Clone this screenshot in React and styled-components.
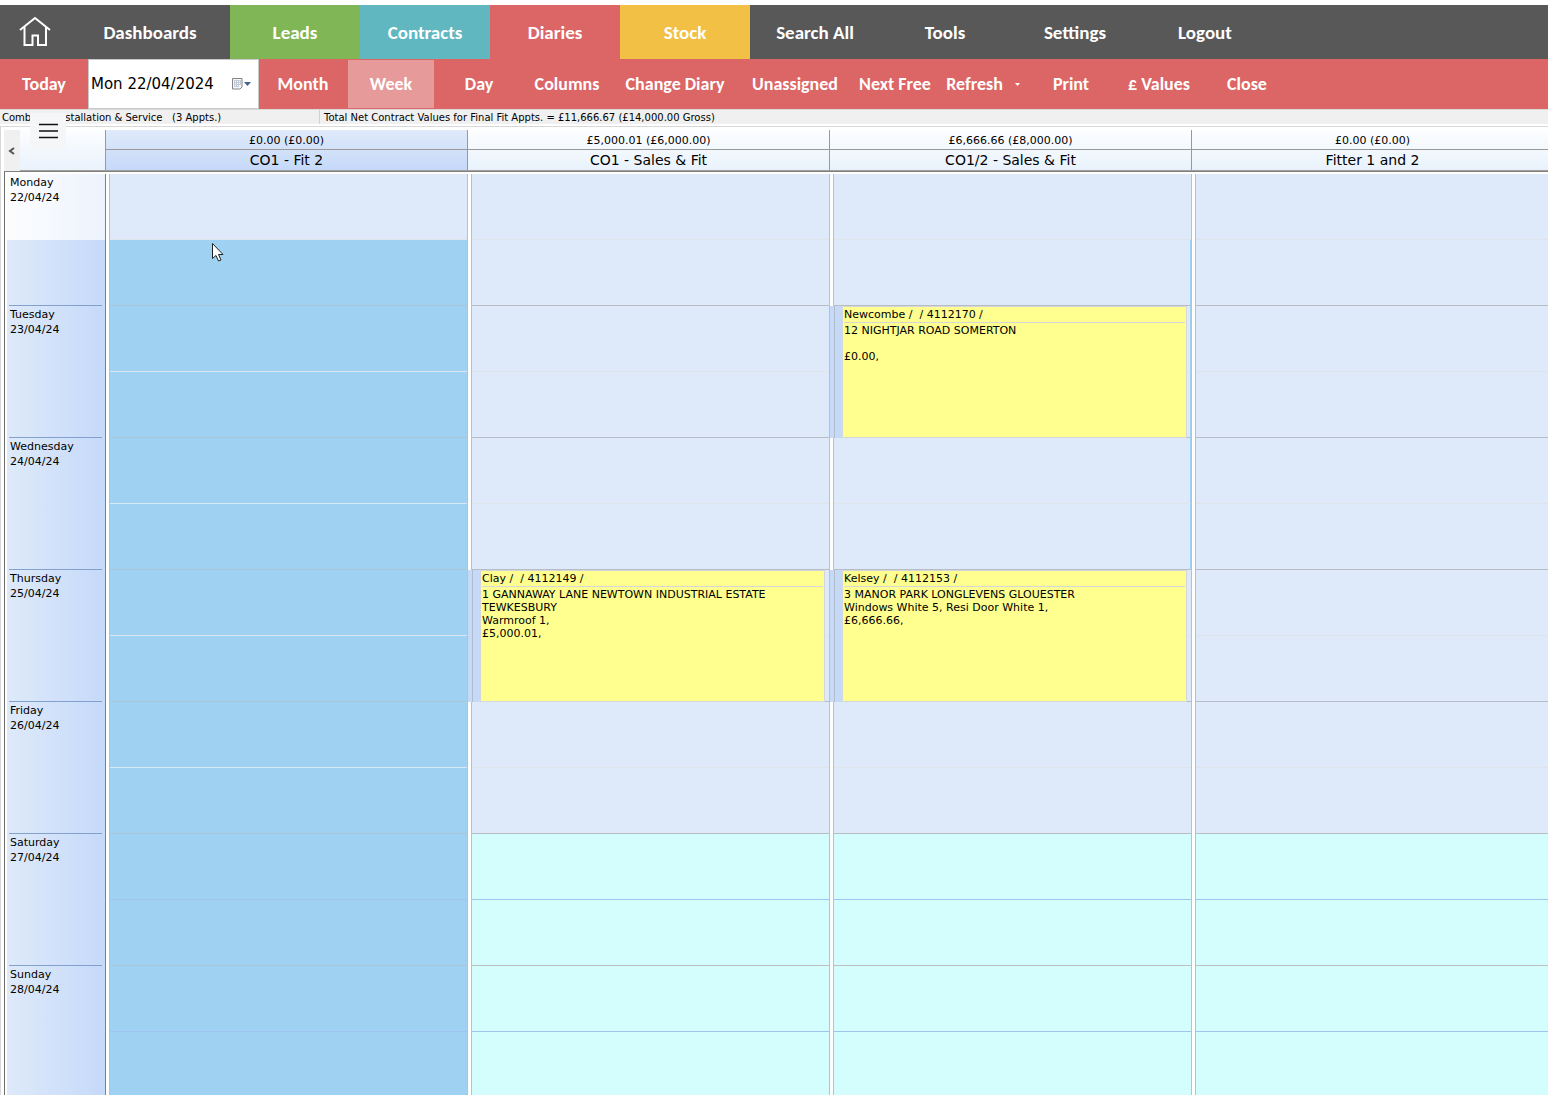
import React from 'react'
import styled, { createGlobalStyle } from 'styled-components'

const GlobalStyle = createGlobalStyle`
    * {
        box-sizing: border-box;
    }
    body {
        margin: 0;
        background-color: white;
        color: black;
        font-family: Verdana, "DejaVu Sans", sans-serif;
        font-size: 11px;
    }
    button, input {
        font: inherit;
        color: inherit;
        border: none;
        padding: 0;
        margin: 0;
        background: none;
    }
`;

const Container = styled.div`
    height: 100vh;
    padding-top: 5px;
    display: flex;
    flex-direction: column;
    overflow: hidden;
`;

const Nav = styled.nav`
    display: flex;
    flex: none;
    height: 54px;
    background-color: #585858;
    color: white;
    font: bold 19px Calibri, Carlito, Lato, sans-serif;
`;

const NavLink = styled.a`
    width: ${(props) => props.$width || 130}px;
    display: flex;
    align-items: center;
    justify-content: center;
    color: white;
    text-decoration: none;
    background-color: ${(props) => props.$color || 'transparent'};
`;

const Toolbar = styled.div`
    display: flex;
    flex: none;
    height: 50px;
    background-color: #dc6565;
    color: white;
    font: bold 18px Calibri, Carlito, Lato, sans-serif;
`;

const ToolButton = styled.button`
    width: ${(props) => props.$width || 88}px;
    display: flex;
    align-items: center;
    justify-content: center;
    gap: 12px;
    white-space: nowrap;
    cursor: pointer;
    border: 1px solid #dc6565;
    background-color: ${(props) => (props.$active ? '#e69a9a' : 'transparent')};
`;

const DateField = styled.div`
    width: 171px;
    display: flex;
    align-items: center;
    justify-content: space-between;
    padding: 0 6px 0 2px;
    background-color: white;
    border: 1px solid #c8c8c8;
    color: black;
`;

const DateInput = styled.input`
    width: 136px;
    font: 15px Verdana, "DejaVu Sans", sans-serif;
    outline: none;
`;

const IconButton = styled.button`
    display: flex;
    align-items: center;
    cursor: pointer;
`;

const StatusBar = styled.div`
    display: flex;
    flex: none;
    height: 15px;
    line-height: 15px;
    font-size: 10px;
    white-space: pre;
    background-color: #f0f0f0;
    border-top: 1px solid #dadada;
`;

const StatusText = styled.span`
    width: ${(props) => props.$width || 'auto'};
    padding-left: ${(props) => (props.$divider ? 4 : 2)}px;
    border-left: ${(props) => (props.$divider ? '1px solid #d0d0d0' : 'none')};
`;

const MenuButton = styled.button`
    position: absolute;
    top: 113px;
    left: 30px;
    width: 36px;
    height: 36px;
    display: flex;
    align-items: center;
    justify-content: center;
    background-color: #f5f6f7;
`;

const Diary = styled.main`
    flex: 1;
    min-height: 0;
    display: flex;
    flex-direction: column;
    margin-top: 2px;
    padding: 3px 0 0 3px;
    border-top: 1px solid #d8d8d8;
    border-left: 1px solid #d8d8d8;
    overflow: hidden;
`;

const Header = styled.div`
    display: flex;
    flex: none;
    height: 42px;
    border-bottom: 1px solid #808078;
    margin-right: -5px;
`;

const BackButton = styled.button`
    width: 16px;
    background-color: #f0f0f0;
    display: flex;
    align-items: center;
    justify-content: center;
`;

const Corner = styled.div`
    width: 85px;
    border-bottom: 1px solid #a0a0a0;
    background: linear-gradient(#fcfdff, #eaf2fc);
`;

const ColumnHead = styled.div`
    flex: 1;
    min-width: 0;
    text-align: center;
    border-left: 1px solid #999;
    border-bottom: 1px solid #a0a0a0;
    background: ${(props) => (props.$selected
        ? 'linear-gradient(#dfeafa, #c5d9f9)'
        : 'linear-gradient(#fdfeff, #e9f2fc)')};
`;

const Total = styled.div`
    height: 20px;
    line-height: 21px;
    border-bottom: 1px solid #999;
`;

const ColumnName = styled.div`
    font-size: 14px;
    line-height: 21px;
`;

const Body = styled.div`
    display: flex;
    flex: 1;
    min-height: 0;
    overflow: hidden;
    margin-right: -6px;
    padding-top: 2px;
    border-left: 1px solid #707070;
`;

const Days = styled.div`
    width: 101px;
    flex: none;
    padding-left: 2px;
    border-right: 1px solid #808080;
    height: max-content;
`;

const Day = styled.div`
    height: 132px;
    padding: 0 3px 0 2px;
    background: ${(props) => (props.$today
        ? 'linear-gradient(to right, #fdfdfe, #ecf3fd) top / 100% 66px no-repeat, '
        : '')}linear-gradient(to right, #deeafa, #c5d9f9);
`;

const DayLabel = styled.div`
    height: 132px;
    padding: 1px;
    line-height: 15px;
    border-bottom: 1px solid #84a0cc;
`;

const Column = styled.div`
    flex: 1;
    min-width: 0;
    height: max-content;
    padding-left: 3px;
`;

const ColumnDay = styled.div`
    position: relative;
    border: 1px solid #bfbfbf;
    border-width: 0 1px;
`;

// background, half day line, end of day line
const slotColors = {
    work: ['#deeafa', '#dfe3ec', '#b8bcc4'],
    weekend: ['#d4fefe', '#a0c4f0', '#bfbfbf'],
    selected: ['#9fd2f2', '#d9e8f4', '#abc5d2'],
    selectedWeekend: ['#9fd2f2', '#9fc4f0', '#abc5d2'],
};

const Slot = styled.div`
    height: 66px;
    background-color: ${(props) => slotColors[props.$kind][0]};
    border-bottom: 1px solid ${(props) => slotColors[props.$kind][props.$last ? 2 : 1]};
    border-right: ${(props) => (props.$edge ? '1px solid #9fd2f2' : 'none')};
`;

const Appointment = styled.article`
    position: absolute;
    top: 0;
    bottom: 0;
    left: -4px;
    right: 4px;
    border-left: 12px solid #c5d9f9;
    display: flex;

    &::before {
        content: "";
        position: absolute;
        top: 0;
        bottom: 0;
        left: -12px;
        width: 4px;
        border-right: 1px solid #b4bccc;
    }
`;

const Card = styled.div`
    flex: 1;
    padding: 0 1px;
    line-height: 13px;
    white-space: pre-line;
    background-color: #ffff90;
    border: 1px solid #d4d8dc;
`;

const CardTitle = styled.div`
    height: 16px;
    line-height: 16px;
    margin-bottom: 1px;
    white-space: pre;
    border-bottom: 1px solid #d4d8dc;
`;

const Pointer = styled.svg`
    position: absolute;
    top: 242px;
    left: 211px;
`;

const navItems = [
    { name: 'Dashboards', width: 160 },
    { name: 'Leads', color: '#80b655' },
    { name: 'Contracts', color: '#60b7c0' },
    { name: 'Diaries', color: '#dc6565' },
    { name: 'Stock', color: '#f1c045' },
    { name: 'Search All' },
    { name: 'Tools' },
    { name: 'Settings' },
    { name: 'Logout' },
];

const tools = [
    { name: 'Month' },
    { name: 'Week', active: true },
    { name: 'Day' },
    { name: 'Columns' },
    { name: 'Change Diary', width: 128 },
    { name: 'Unassigned', width: 112 },
    { name: 'Next Free' },
    { name: 'Refresh', menu: true },
    { name: 'Print' },
    { name: '£ Values' },
    { name: 'Close' },
];

const days = [
    { name: 'Monday', date: '22/04/24' },
    { name: 'Tuesday', date: '23/04/24' },
    { name: 'Wednesday', date: '24/04/24' },
    { name: 'Thursday', date: '25/04/24' },
    { name: 'Friday', date: '26/04/24' },
    { name: 'Saturday', date: '27/04/24', weekend: true },
    { name: 'Sunday', date: '28/04/24', weekend: true },
];

const columns = [
    { name: 'CO1 - Fit 2', total: '£0.00 (£0.00)', selected: true, appointments: {} },
    {
        name: 'CO1 - Sales & Fit',
        total: '£5,000.01 (£6,000.00)',
        appointments: {
            Thursday: {
                title: 'Clay /  / 4112149 /',
                text: '1 GANNAWAY LANE NEWTOWN INDUSTRIAL ESTATE\nTEWKESBURY\nWarmroof 1,\n£5,000.01,',
            },
        },
    },
    {
        name: 'CO1/2 - Sales & Fit',
        total: '£6,666.66 (£8,000.00)',
        edge: true,
        appointments: {
            Tuesday: {
                title: 'Newcombe /  / 4112170 /',
                text: '12 NIGHTJAR ROAD SOMERTON\n\n£0.00,',
            },
            Thursday: {
                title: 'Kelsey /  / 4112153 /',
                text: '3 MANOR PARK LONGLEVENS GLOUESTER\nWindows White 5, Resi Door White 1,\n£6,666.66,',
            },
        },
    },
    { name: 'Fitter 1 and 2', total: '£0.00 (£0.00)', appointments: {} },
];

const slotKind = (column, day, index) => {
    if (column.selected && index > 0) return day.weekend ? 'selectedWeekend' : 'selected'
    return day.weekend ? 'weekend' : 'work'
}

const HomeIcon = () => (
    <svg width="32" height="32" viewBox="0 0 32 32" fill="none" stroke="white" strokeWidth="2">
        <path d="M1 14L16 2l15 12" />
        <path d="M5.500 11v18h8V19.500h5.500V29h8V11" />
    </svg>
)

const CalendarIcon = () => (
    <svg width="21" height="14" viewBox="0 0 21 14">
        <path d="M1.500 1.500h9.500v8.500l-2 2h-7.500z" fill="#f6f7fa" stroke="#85828a" />
        <path d="M3 3.500h7M3 5.500h7M3 7.500h7M3 9.500h5M3.500 3v7M5.500 3v7M7.500 3v7M9.500 3v5" stroke="#c3cad8" strokeWidth="1" fill="none" />
        <path d="M13 5h7l-3.500 4z" fill="#44608c" />
    </svg>
)

const App = () => {
  return (
    <Container>
        <GlobalStyle/>
        <Nav>
            <NavLink href="#home" aria-label="Home" $width={70}><HomeIcon/></NavLink>
            {navItems.map((item) => (
                <NavLink key={item.name} href="#" $width={item.width} $color={item.color}>{item.name}</NavLink>
            ))}
        </Nav>
        <Toolbar>
            <ToolButton>Today</ToolButton>
            <DateField>
                <DateInput aria-label="Date" defaultValue="Mon 22/04/2024"/>
                <IconButton aria-label="Choose date"><CalendarIcon/></IconButton>
            </DateField>
            {tools.map((tool) => (
                <ToolButton key={tool.name} $width={tool.width} $active={tool.active}>
                    {tool.name}
                    {tool.menu && <svg width="5" height="3"><path d="M0 0h5L2.500 3z" fill="white"/></svg>}
                </ToolButton>
            ))}
        </Toolbar>
        <StatusBar>
            <StatusText $width="319px">Combined Installation & Service   (3 Appts.)</StatusText>
            <StatusText $divider>Total Net Contract Values for Final Fit Appts. = £11,666.67 (£14,000.00 Gross)</StatusText>
        </StatusBar>
        <Diary>
            <Header>
                <BackButton aria-label="Previous">
                    <svg width="8" height="8" fill="none" stroke="#555" strokeWidth="2"><path d="M6 1L2 4l4 3"/></svg>
                </BackButton>
                <Corner/>
                {columns.map((column) => (
                    <ColumnHead key={column.name} $selected={column.selected}>
                        <Total>{column.total}</Total>
                        <ColumnName>{column.name}</ColumnName>
                    </ColumnHead>
                ))}
            </Header>
            <Body>
                <Days>
                    {days.map((day, i) => (
                        <Day key={day.name} $today={i === 0}>
                            <DayLabel>{day.name}<br/>{day.date}</DayLabel>
                        </Day>
                    ))}
                </Days>
                {columns.map((column) => (
                    <Column key={column.name}>
                        {days.map((day, i) => {
                            const appointment = column.appointments[day.name]
                            return (
                                <ColumnDay key={day.name}>
                                    <Slot $kind={slotKind(column, day, i * 2)} $edge={column.edge && i > 0 && i < 3}/>
                                    <Slot $kind={slotKind(column, day, i * 2 + 1)} $edge={column.edge && i < 3} $last/>
                                    {appointment && (
                                        <Appointment>
                                            <Card>
                                                <CardTitle>{appointment.title}</CardTitle>
                                                {appointment.text}
                                            </Card>
                                        </Appointment>
                                    )}
                                </ColumnDay>
                            )
                        })}
                    </Column>
                ))}
            </Body>
        </Diary>
        <MenuButton aria-label="Menu">
            <svg width="20" height="16" stroke="#111" strokeWidth="1.5"><path d="M1 1.500h19M1 8h19M1 14.500h19"/></svg>
        </MenuButton>
        <Pointer width="13" height="20" viewBox="0 0 13 20">
            <path d="M1.500 1.500v15l3.500-3 2.500 5.500 2.500-1-2.500-5.500h4.500z" fill="white" stroke="#222"/>
        </Pointer>
    </Container>
  )
}

export default App
